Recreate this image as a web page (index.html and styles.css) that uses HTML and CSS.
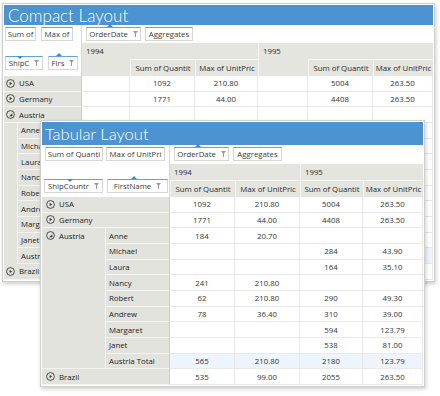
FILE: index.html
```html
<!DOCTYPE html>
<html lang="en">
<head>
    <meta charset="UTF-8">
    <title>Pivot Layouts</title>
    <link rel="stylesheet" href="styles.css">
</head>
<body>
    <div class="stage">

        <!-- Compact layout window (behind) -->
        <div class="panel panel-compact">
            <div class="title">Compact Layout</div>
            <div class="toolbar">
                <div class="zone-rows">
                    <div class="field w-31">Sum of</div>
                    <div class="field w-32">Max of</div>
                </div>
                <div class="zone-cols">
                    <div class="field w-55"><span class="sort-up"></span>OrderDate <svg class="funnel" viewBox="0 0 5 6"><path d="M0 0H5L3 2.6V6H2V2.6Z"/></svg></div>
                    <div class="field w-48">Aggregates</div>
                </div>
            </div>
            <div class="pivot pivot-compact">
                <div class="corner">
                    <div class="field w-38"><span class="sort-down"></span>ShipC <svg class="funnel" viewBox="0 0 5 6"><path d="M0 0H5L3 2.6V6H2V2.6Z"/></svg></div>
                    <div class="field w-30"><span class="sort-up"></span>Firs <svg class="funnel" viewBox="0 0 5 6"><path d="M0 0H5L3 2.6V6H2V2.6Z"/></svg></div>
                </div>
                <div class="hd year span-3">1994</div>
                <div class="hd year span-3 sep">1995</div>
                <div class="hd sub"></div>
                <div class="hd sub colhd">Sum of Quantit</div>
                <div class="hd sub colhd">Max of UnitPric</div>
                <div class="hd sub sep"></div>
                <div class="hd sub colhd">Sum of Quantit</div>
                <div class="hd sub colhd">Max of UnitPric</div>

                <div class="rh span-2"><svg class="toggle" viewBox="0 0 9 9"><circle cx="4.5" cy="4.5" r="3.9"/><path d="M3.6 2.8L6.1 4.5L3.6 6.2Z"/></svg>USA</div>
                <div class="cell"></div><div class="cell">1092</div><div class="cell">210.80</div><div class="cell"></div><div class="cell">5004</div><div class="cell">263.50</div>

                <div class="rh span-2"><svg class="toggle" viewBox="0 0 9 9"><circle cx="4.5" cy="4.5" r="3.9"/><path d="M3.6 2.8L6.1 4.5L3.6 6.2Z"/></svg>Germany</div>
                <div class="cell"></div><div class="cell">1771</div><div class="cell">44.00</div><div class="cell"></div><div class="cell">4408</div><div class="cell">263.50</div>

                <div class="rh span-2"><svg class="toggle" viewBox="0 0 9 9"><circle cx="4.5" cy="4.5" r="3.9"/><path d="M6.3 3.2V6.3H3.2Z"/></svg>Austria</div>
                <div class="cell"></div><div class="cell"></div><div class="cell"></div><div class="cell"></div><div class="cell"></div><div class="cell"></div>

                <!-- rows below are covered by the tabular window, values left out -->
                <div class="rh group strip"></div>
                <div class="rh child">Anne</div>
                <div class="cell"></div><div class="cell"></div><div class="cell"></div><div class="cell"></div><div class="cell"></div><div class="cell"></div>
                <div class="rh child">Michael</div>
                <div class="cell"></div><div class="cell"></div><div class="cell"></div><div class="cell"></div><div class="cell"></div><div class="cell"></div>
                <div class="rh child">Laura</div>
                <div class="cell"></div><div class="cell"></div><div class="cell"></div><div class="cell"></div><div class="cell"></div><div class="cell"></div>
                <div class="rh child">Nancy</div>
                <div class="cell"></div><div class="cell"></div><div class="cell"></div><div class="cell"></div><div class="cell"></div><div class="cell"></div>
                <div class="rh child">Robert</div>
                <div class="cell"></div><div class="cell"></div><div class="cell"></div><div class="cell"></div><div class="cell"></div><div class="cell"></div>
                <div class="rh child">Andrew</div>
                <div class="cell"></div><div class="cell"></div><div class="cell"></div><div class="cell"></div><div class="cell"></div><div class="cell"></div>
                <div class="rh child">Margaret</div>
                <div class="cell"></div><div class="cell"></div><div class="cell"></div><div class="cell"></div><div class="cell"></div><div class="cell"></div>
                <div class="rh child">Janet</div>
                <div class="cell"></div><div class="cell"></div><div class="cell"></div><div class="cell"></div><div class="cell"></div><div class="cell"></div>
                <div class="rh child">Austria Total</div>
                <div class="cell total"></div><div class="cell total"></div><div class="cell total"></div><div class="cell total"></div><div class="cell total"></div><div class="cell total"></div>

                <div class="rh span-2"><svg class="toggle" viewBox="0 0 9 9"><circle cx="4.5" cy="4.5" r="3.9"/><path d="M3.6 2.8L6.1 4.5L3.6 6.2Z"/></svg>Brazil</div>
                <div class="cell"></div><div class="cell"></div><div class="cell"></div><div class="cell"></div><div class="cell"></div><div class="cell"></div>
            </div>
        </div>

        <!-- Tabular layout window (front) -->
        <div class="panel panel-tabular">
            <div class="title">Tabular Layout</div>
            <div class="toolbar toolbar-tall">
                <div class="zone-rows zone-wide">
                    <div class="field w-58">Sum of Quanti</div>
                    <div class="field w-59">Max of UnitPri</div>
                </div>
                <div class="zone-cols">
                    <div class="field w-55"><span class="sort-up"></span>OrderDate <svg class="funnel" viewBox="0 0 5 6"><path d="M0 0H5L3 2.6V6H2V2.6Z"/></svg></div>
                    <div class="field w-49">Aggregates</div>
                </div>
            </div>
            <div class="pivot pivot-tabular">
                <div class="corner">
                    <div class="field w-59"><span class="sort-down"></span>ShipCountr <svg class="funnel" viewBox="0 0 5 6"><path d="M0 0H5L3 2.6V6H2V2.6Z"/></svg></div>
                    <div class="field w-61"><span class="sort-up"></span>FirstName <svg class="funnel" viewBox="0 0 5 6"><path d="M0 0H5L3 2.6V6H2V2.6Z"/></svg></div>
                </div>
                <div class="hd year span-2">1994</div>
                <div class="hd year span-2 sep">1995</div>
                <div class="hd sub colhd">Sum of Quantit</div>
                <div class="hd sub colhd">Max of UnitPric</div>
                <div class="hd sub colhd">Sum of Quantit</div>
                <div class="hd sub colhd">Max of UnitPric</div>

                <div class="rh span-2"><svg class="toggle" viewBox="0 0 9 9"><circle cx="4.5" cy="4.5" r="3.9"/><path d="M3.6 2.8L6.1 4.5L3.6 6.2Z"/></svg>USA</div>
                <div class="cell">1092</div><div class="cell">210.80</div><div class="cell">5004</div><div class="cell">263.50</div>

                <div class="rh span-2"><svg class="toggle" viewBox="0 0 9 9"><circle cx="4.5" cy="4.5" r="3.9"/><path d="M3.6 2.8L6.1 4.5L3.6 6.2Z"/></svg>Germany</div>
                <div class="cell">1771</div><div class="cell">44.00</div><div class="cell">4408</div><div class="cell">263.50</div>

                <div class="rh group country"><svg class="toggle" viewBox="0 0 9 9"><circle cx="4.5" cy="4.5" r="3.9"/><path d="M6.3 3.2V6.3H3.2Z"/></svg>Austria</div>
                <div class="rh child">Anne</div>
                <div class="cell">184</div><div class="cell">20.70</div><div class="cell"></div><div class="cell"></div>
                <div class="rh child">Michael</div>
                <div class="cell"></div><div class="cell"></div><div class="cell">284</div><div class="cell">43.90</div>
                <div class="rh child">Laura</div>
                <div class="cell"></div><div class="cell"></div><div class="cell">164</div><div class="cell">35.10</div>
                <div class="rh child">Nancy</div>
                <div class="cell">241</div><div class="cell">210.80</div><div class="cell"></div><div class="cell"></div>
                <div class="rh child">Robert</div>
                <div class="cell">62</div><div class="cell">210.80</div><div class="cell">290</div><div class="cell">49.30</div>
                <div class="rh child">Andrew</div>
                <div class="cell">78</div><div class="cell">36.40</div><div class="cell">310</div><div class="cell">39.00</div>
                <div class="rh child">Margaret</div>
                <div class="cell"></div><div class="cell"></div><div class="cell">594</div><div class="cell">123.79</div>
                <div class="rh child">Janet</div>
                <div class="cell"></div><div class="cell"></div><div class="cell">538</div><div class="cell">81.00</div>
                <div class="rh child">Austria Total</div>
                <div class="cell total">565</div><div class="cell total">210.80</div><div class="cell total">2180</div><div class="cell total">123.79</div>

                <div class="rh span-2"><svg class="toggle" viewBox="0 0 9 9"><circle cx="4.5" cy="4.5" r="3.9"/><path d="M3.6 2.8L6.1 4.5L3.6 6.2Z"/></svg>Brazil</div>
                <div class="cell">535</div><div class="cell">99.00</div><div class="cell">2055</div><div class="cell">263.50</div>
            </div>
        </div>

    </div>
</body>
</html>
```

FILE: styles.css
```css
* {
    box-sizing: border-box;
}
body {
    margin: 0;
    background: #fff;
    font-family: "Open Sans", "Noto Sans", sans-serif;
    font-size: 7.8px;
    color: #2b2b2b;
}
.stage {
    position: relative;
    width: 440px;
    height: 396px;
    overflow: hidden;
}

/* windows */
.panel {
    position: absolute;
    background: #fff;
    border: 1px solid #cfd0cc;
    padding: 1px;
    box-shadow: 1px 2px 4px rgba(0, 0, 0, 0.2);
}
.panel-compact {
    left: 2px;
    top: 3px;
    width: 433px;
}
.panel-tabular {
    left: 40px;
    top: 120px;
    width: 385px;
}
.title {
    display: flex;
    align-items: center;
    background: #4b93d1;
    color: #fff;
    font-family: Lato, sans-serif;
    font-weight: 300;
    white-space: nowrap;
}
.panel-compact .title {
    height: 20px;
    padding-left: 4px;
    font-size: 17px;
}
.panel-tabular .title {
    height: 23px;
    padding-left: 3px;
    font-size: 16.5px;
}

/* field buttons */
.toolbar {
    display: flex;
    height: 18px;
}
.toolbar-tall {
    height: 19px;
}
.zone-rows {
    display: flex;
    gap: 5px;
    width: 78px;
    padding: 2px 0 0 1px;
    border-right: 1px solid #d8d9d5;
}
.zone-wide {
    width: 128px;
    gap: 3px;
    padding-left: 3px;
}
.zone-cols {
    display: flex;
    gap: 4px;
    padding: 2px 0 0 4px;
}
.field {
    position: relative;
    display: flex;
    align-items: center;
    justify-content: center;
    gap: 5px;
    height: 14px;
    background: #fff;
    border: 1px solid #d6d7d3;
    border-top-color: #62a3d8;
    color: #3a3a3a;
    white-space: nowrap;
}
.w-30 { width: 30px; }
.w-31 { width: 31px; }
.w-32 { width: 32px; }
.w-38 { width: 38px; }
.w-48 { width: 48px; }
.w-49 { width: 49px; }
.w-55 { width: 55px; }
.w-58 { width: 58px; }
.w-59 { width: 59px; }
.w-61 { width: 61px; }
.funnel {
    width: 5px;
    height: 6px;
    fill: #9a9a9a;
    flex: none;
}
.sort-up,
.sort-down {
    position: absolute;
    left: 50%;
    margin-left: -7px;
    width: 0;
    height: 0;
    border-left: 3px solid transparent;
    border-right: 3px solid transparent;
}
.sort-up {
    top: -4px;
    border-bottom: 3px solid #3c8ccc;
}
.sort-down {
    top: -1px;
    border-top: 3px solid #3c8ccc;
}

/* pivot grid */
.pivot {
    display: grid;
}
.pivot-compact {
    grid-template-columns: 14px 64px 48px 65px 63px 50px 65px 60px;
    grid-template-rows: 16px 17px repeat(13, 15.67px);
}
.pivot-tabular {
    grid-template-columns: 64px 64px 65px 65px 63px 60px;
    grid-template-rows: 16px 17px repeat(12, 15.67px);
}
.span-2 { grid-column: span 2; }
.span-3 { grid-column: span 3; }
.corner {
    grid-column: span 2;
    grid-row: span 2;
    display: flex;
    align-items: flex-end;
    background: #fff;
    border-right: 1px solid #d8d9d5;
}
.pivot-compact .corner {
    gap: 5px;
    padding: 0 0 6px 1px;
}
.pivot-tabular .corner {
    gap: 4px;
    padding: 0 0 4px 2px;
}
.hd {
    background: #e4e5df;
}
.year {
    padding: 3px 0 0 4px;
}
.sep,
.colhd {
    border-left: 1px solid #f5f5f1;
}
.colhd {
    display: flex;
    align-items: center;
    justify-content: center;
    border-top: 1px solid #f5f5f1;
    white-space: nowrap;
    overflow: hidden;
}

/* row headers */
.rh {
    display: flex;
    align-items: center;
    gap: 4px;
    padding-left: 2px;
    background: #e2e3dd;
    border-bottom: 1px solid #f3f3ef;
    border-right: 1px solid #cdcec8;
    white-space: nowrap;
    overflow: hidden;
    color: #222;
}
.pivot-tabular .rh {
    padding-left: 4px;
}
.group {
    grid-row: span 9;
    border-right-color: #f3f3ef;
}
.strip {
    border-bottom: 0;
}
.country {
    align-items: flex-start;
    padding-top: 3px;
}
.rh.child {
    padding-left: 3px;
}
.toggle {
    width: 9px;
    height: 9px;
    flex: none;
    fill: #333;
}
.toggle circle {
    fill: none;
    stroke: #3a3a3a;
    stroke-width: 0.9;
}

/* values */
.cell {
    display: flex;
    align-items: center;
    justify-content: center;
    background: #fff;
    border-right: 1px solid #e9e9e9;
    border-bottom: 1px solid #e9e9e9;
    color: #333;
}
.total {
    background: #eef4fb;
}
```
